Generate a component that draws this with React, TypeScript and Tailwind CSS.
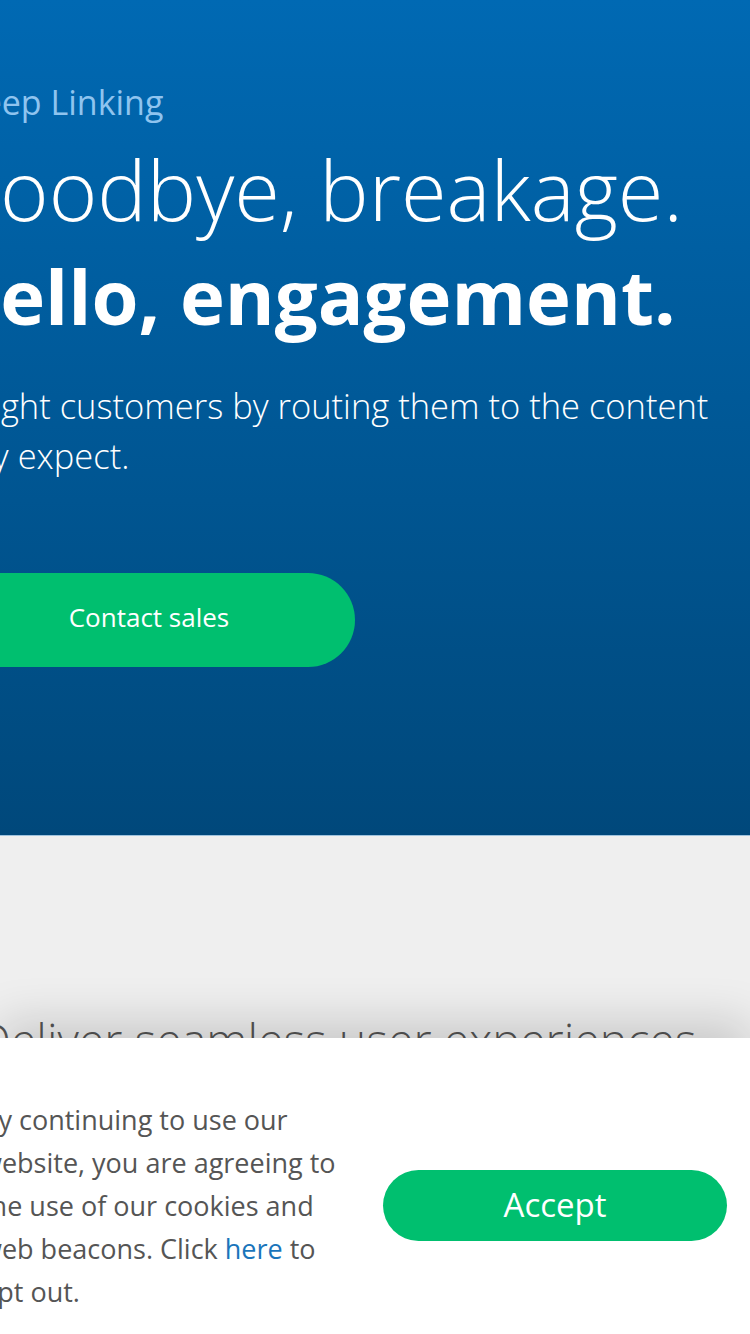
import React from "react";

const font = { fontFamily: '"Open Sans", "Liberation Sans", sans-serif' };

export default function App() {
  return (
    <div className="relative h-[1334px] w-[750px] overflow-hidden bg-[#efefef]" style={font}>
      {/* hero */}
      <section className="h-[836px] border-b border-[#9fc3de] bg-gradient-to-b from-[#0069b3] to-[#00487b] pt-[78px]">
        <div className="w-[840px]">
          <p className="-ml-[42px] text-[34px] font-normal leading-[48px] text-[#8fc4ef]">Deep Linking</p>
          <h1 className="mt-[18px] text-white">
            <span className="-ml-[60px] block text-[83px] font-light leading-[90px]">Goodbye, breakage.</span>
            <span className="-ml-[58px] mt-[17px] block text-[76px] font-bold leading-[90px]">Hello, engagement.</span>
          </h1>
          <p className="-ml-[58px] mt-[40px] w-[800px] text-[34.5px] font-light leading-[50px] text-white">
            Delight customers by routing them to the content they expect.
          </p>
          <button className="-ml-[57px] mt-[92px] flex h-[94px] w-[412px] items-center justify-center rounded-full bg-[#00bf6f] pb-[6px] text-[26px] text-white">
            Contact sales
          </button>
        </div>
      </section>

      {/* features */}
      <section className="pt-[180px]">
        <h2 className="-ml-[22px] w-[820px] text-[46.5px] font-light leading-[46px] text-[#555]">
          Deliver seamless user experiences
        </h2>
      </section>

      {/* cookie banner */}
      <div className="absolute inset-x-0 bottom-0 flex h-[296px] items-center bg-white pt-[38px] shadow-[0_-16px_44px_rgba(0,0,0,0.16)]">
        <p className="-ml-[19px] w-[376px] shrink-0 text-[27px] leading-[43px] text-[#555]">
          By continuing to use our website, you are agreeing to the use of our cookies and web beacons. Click{" "}
          <a className="text-[#1a75bb]">here</a> to opt out.
        </p>
        <button className="ml-[26px] flex h-[71px] w-[344px] items-center justify-center rounded-full bg-[#00bf6f] text-[33px] text-white">
          Accept
        </button>
      </div>
    </div>
  );
}
